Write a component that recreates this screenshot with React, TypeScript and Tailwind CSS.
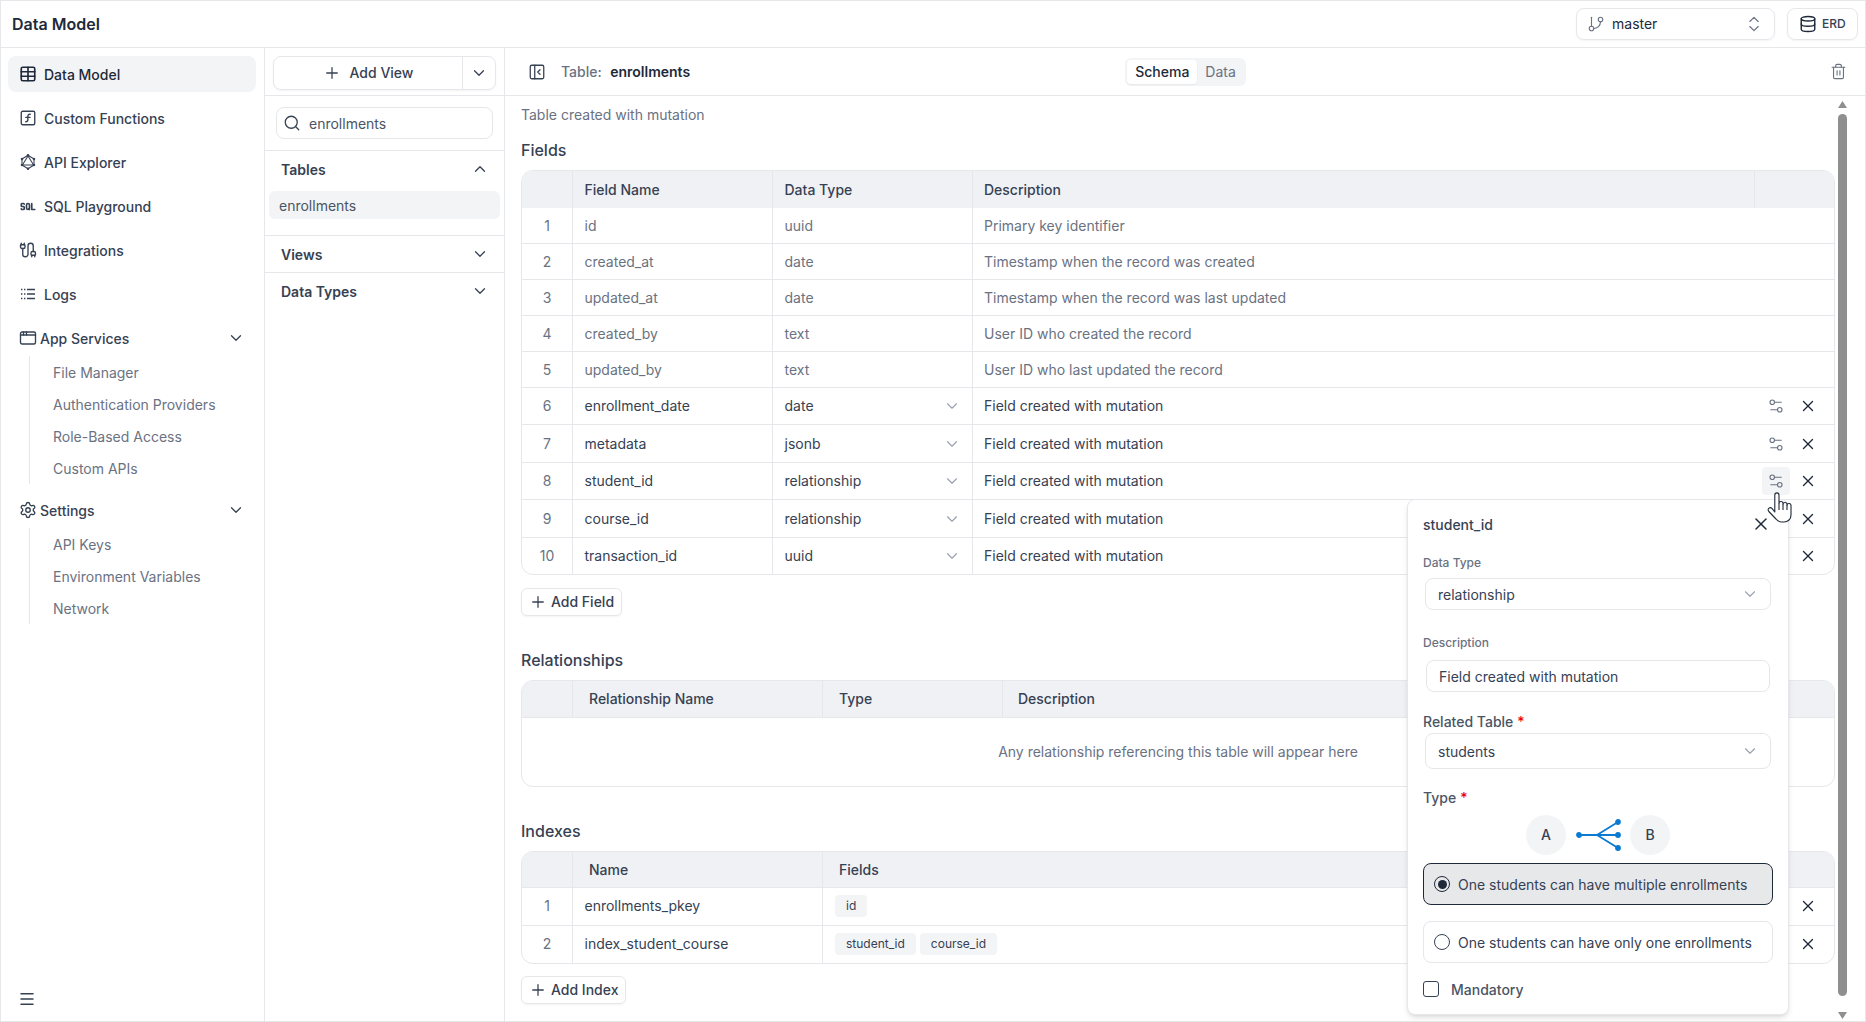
import {
  AppWindow,
  Cable,
  ChevronDown,
  ChevronUp,
  ChevronsUpDown,
  Database,
  GitBranch,
  Menu,
  PanelLeftClose,
  Plus,
  Search,
  Settings,
  Settings2,
  SquareFunction,
  Table,
  Trash2,
  X,
} from "lucide-react";
import { TbBrandGraphql, TbSql } from "react-icons/tb";
import type { ReactNode } from "react";

const LogsIcon = () => (
  <svg width="18" height="18" viewBox="0 0 18 18" fill="none" stroke="currentColor" strokeWidth="1.4">
    <path d="M2 4.5h1.4M5 4.5h1.4M8 4.5h8M2 9h1.4M5 9h1.4M8 9h8M2 13.5h1.4M5 13.5h1.4M8 13.5h8" />
  </svg>
);

const topNav = [
  { label: "Data Model", icon: <Table size={18} strokeWidth={2.2} />, active: true },
  { label: "Custom Functions", icon: <SquareFunction size={18} strokeWidth={1.8} /> },
  { label: "API Explorer", icon: <TbBrandGraphql size={18} strokeWidth={1.4} /> },
  { label: "SQL Playground", icon: <TbSql size={23} strokeWidth={2.2} /> },
  { label: "Integrations", icon: <Cable size={18} strokeWidth={1.8} /> },
  { label: "Logs", icon: <LogsIcon /> },
];

const NavGroup = ({ icon, label, items }: { icon: ReactNode; label: string; items: string[] }) => (
  <div>
    <div className="flex h-9 items-center gap-[3px] pr-[11px] pl-[11px] text-sm font-medium text-gray-700">
      {icon}
      <span className="flex-1 pt-px">{label}</span>
      <ChevronDown size={18} strokeWidth={1.7} />
    </div>
    <div className="ml-[21px] border-l border-gray-200 pl-[23px]">
      {items.map((item) => (
        <div key={item} className="flex h-8 items-center pt-px text-sm text-gray-500">
          {item}
        </div>
      ))}
    </div>
  </div>
);

const Sidebar = () => (
  <aside className="flex w-[264px] shrink-0 flex-col border-r border-gray-200 pt-2 pr-[7px] pl-[7px]">
    <div className="flex w-[248px] flex-col gap-2">
      {topNav.map((item) => (
        <div
          key={item.label}
          className={`flex h-9 items-center gap-[7px] rounded-lg pl-[11px] text-sm font-medium ${
            item.active ? "bg-gray-100 text-gray-800" : "text-gray-700"
          }`}
        >
          <span className="flex w-[18px] justify-center">{item.icon}</span>
          <span className="pt-px">{item.label}</span>
        </div>
      ))}
      <NavGroup
        icon={<AppWindow size={18} strokeWidth={1.8} />}
        label="App Services"
        items={["File Manager", "Authentication Providers", "Role-Based Access", "Custom APIs"]}
      />
      <NavGroup
        icon={<Settings size={18} strokeWidth={1.8} />}
        label="Settings"
        items={["API Keys", "Environment Variables", "Network"]}
      />
    </div>
    <div className="mt-auto flex h-[31px] items-start pl-[10px] text-gray-700">
      <Menu size={18} />
    </div>
  </aside>
);

const PanelHeader = ({ title, open }: { title: string; open?: boolean }) => (
  <div className="flex h-9 items-center justify-between pr-[15px] pl-4 text-sm font-semibold text-gray-700">
    <span className="pt-px">{title}</span>
    {open ? <ChevronUp size={18} strokeWidth={1.7} /> : <ChevronDown size={18} strokeWidth={1.7} />}
  </div>
);

const TablesPanel = () => (
  <div className="flex w-[240px] shrink-0 flex-col border-r border-gray-200">
    <div className="h-12 border-b border-gray-200 px-2 pt-2">
      <div className="flex h-[34px] rounded-lg border border-gray-200 text-sm font-medium text-gray-700 shadow-xs">
        <div className="flex flex-1 items-center justify-center gap-[9px] border-r border-gray-200">
          <Plus size={18} strokeWidth={1.7} />
          Add View
        </div>
        <div className="flex w-[32px] items-center justify-center">
          <ChevronDown size={18} strokeWidth={1.7} />
        </div>
      </div>
    </div>
    <div className="h-[55px] border-b border-gray-200 px-[11px] pt-[11px]">
      <div className="flex h-8 items-center gap-[8px] rounded-lg border border-gray-200 pl-[6px] text-sm text-gray-600">
        <Search size={18} strokeWidth={1.7} className="text-gray-700" />
        <span className="pt-0.5">enrollments</span>
      </div>
    </div>
    <div className="h-[85px] border-b border-gray-200">
      <PanelHeader title="Tables" open />
      <div className="mx-1 mt-1 flex h-7 items-center rounded-md bg-gray-100 pt-px pl-[10px] text-sm text-gray-600">
        enrollments
      </div>
    </div>
    <div className="h-[37px] border-b border-gray-200">
      <PanelHeader title="Views" />
    </div>
    <PanelHeader title="Data Types" />
  </div>
);

const readonlyFields = [
  ["id", "uuid", "Primary key identifier"],
  ["created_at", "date", "Timestamp when the record was created"],
  ["updated_at", "date", "Timestamp when the record was last updated"],
  ["created_by", "text", "User ID who created the record"],
  ["updated_by", "text", "User ID who last updated the record"],
];

const editableFields = [
  { name: "enrollment_date", type: "date", rowClass: "h-[37px]" },
  { name: "metadata", type: "jsonb", rowClass: "h-[38px]" },
  { name: "student_id", type: "relationship", rowClass: "h-[37px]" },
  { name: "course_id", type: "relationship", rowClass: "h-[38px]" },
  { name: "transaction_id", type: "uuid", rowClass: "h-[36px]" },
];

const HeaderCell = ({ className, children }: { className: string; children?: ReactNode }) => (
  <div className={`flex h-full shrink-0 items-center border-r border-gray-200 ${className}`}>{children}</div>
);

const NumCell = ({ n }: { n: number }) => (
  <div className="flex h-full w-[51px] shrink-0 items-center justify-center border-r border-gray-200 text-sm text-gray-500">
    {n}
  </div>
);

const AddButton = ({ label, className }: { label: string; className: string }) => (
  <div className={`flex h-7 w-fit items-center gap-1 rounded-md border border-gray-200 pr-[7px] pl-[7px] text-sm font-medium text-gray-700 shadow-xs ${className}`}>
    <Plus size={18} strokeWidth={1.7} />
    {label}
  </div>
);

const Title = ({ className, children }: { className: string; children: ReactNode }) => (
  <h2 className={`h-6 text-base leading-6 font-medium text-gray-700 ${className}`}>{children}</h2>
);

const Actions = ({ settings, hovered }: { settings?: boolean; hovered?: boolean }) => (
  <div className="ml-auto flex items-center gap-1 pr-3 text-gray-500">
    {settings && (
      <div className={`flex h-7 w-7 items-center justify-center rounded ${hovered ? "bg-gray-100" : ""}`}>
        <Settings2 size={18} strokeWidth={1.5} />
      </div>
    )}
    <div className="flex h-7 w-7 items-center justify-center text-gray-800">
      <X size={18} strokeWidth={1.8} />
    </div>
  </div>
);

const FieldsTable = () => (
  <div className="mt-2 overflow-hidden rounded-xl border border-gray-200">
    <div className="flex h-[37px] bg-[#f0f1f4] text-sm font-medium text-gray-700">
      <HeaderCell className="w-[51px]" />
      <HeaderCell className="w-[200px] pl-[11.5px]">Field Name</HeaderCell>
      <HeaderCell className="w-[200px] pl-[11.5px]">Data Type</HeaderCell>
      <HeaderCell className="w-[782px] pl-[11px]">Description</HeaderCell>
    </div>
    {readonlyFields.map((f, i) => (
      <div key={f[0]} className="flex h-9 items-center border-b border-gray-200 text-sm text-gray-500">
        <NumCell n={i + 1} />
        <div className="flex h-full w-[200px] items-center border-r border-gray-200 pl-[11.5px]">{f[0]}</div>
        <div className="flex h-full w-[200px] items-center border-r border-gray-200 pl-[11.5px]">{f[1]}</div>
        <div className="pl-[11px]">{f[2]}</div>
      </div>
    ))}
    {editableFields.map((f, i) => (
      <div key={f.name} className={`flex items-center border-b border-gray-200 text-sm text-gray-700 last:border-b-0 ${f.rowClass}`}>
        <NumCell n={i + 6} />
        <div className="flex h-full w-[200px] items-center border-r border-gray-200 pl-[11.5px]">{f.name}</div>
        <div className="flex h-full w-[200px] items-center justify-between border-r border-gray-200 pr-[11px] pl-[11.5px]">
          {f.type}
          <ChevronDown size={18} strokeWidth={1.5} className="text-gray-400" />
        </div>
        <div className="pl-[11px]">Field created with mutation</div>
        <Actions settings={i < 3} hovered={i === 2} />
      </div>
    ))}
  </div>
);

const RelationshipsTable = () => (
  <div className="mt-2 overflow-hidden rounded-xl border border-gray-200">
    <div className="flex h-9 bg-[#f0f1f4] text-sm font-medium text-gray-700">
      <HeaderCell className="w-[51px]" />
      <HeaderCell className="w-[250px] pl-4">Relationship Name</HeaderCell>
      <HeaderCell className="w-[180px] pl-4">Type</HeaderCell>
      <div className="flex items-center pl-[15px]">Description</div>
    </div>
    <div className="flex h-[69px] items-center justify-center border-t border-gray-200 text-sm text-gray-500">
      Any relationship referencing this table will appear here
    </div>
  </div>
);

const Chip = ({ children }: { children: ReactNode }) => (
  <span className="flex h-[22px] items-center rounded bg-gray-100 px-[11px] text-xs text-gray-700">{children}</span>
);

const indexRows = [
  { name: "enrollments_pkey", fields: ["id"] },
  { name: "index_student_course", fields: ["student_id", "course_id"] },
];

const IndexesTable = () => (
  <div className="mt-2 overflow-hidden rounded-xl border border-gray-200">
    <div className="flex h-9 border-b border-gray-200 bg-[#f0f1f4] text-sm font-medium text-gray-700">
      <HeaderCell className="w-[51px]" />
      <HeaderCell className="w-[250px] pl-4">Name</HeaderCell>
      <div className="flex items-center pl-4">Fields</div>
    </div>
    {indexRows.map((row, i) => (
      <div key={row.name} className="flex h-[37.5px] items-center border-b border-gray-200 text-sm text-gray-700 last:border-b-0">
        <NumCell n={i + 1} />
        <div className="flex h-full w-[250px] items-center border-r border-gray-200 pl-[11.5px]">{row.name}</div>
        <div className="flex gap-1 pl-3">
          {row.fields.map((f) => (
            <Chip key={f}>{f}</Chip>
          ))}
        </div>
        <Actions />
      </div>
    ))}
  </div>
);

const FakeScrollbar = () => (
  <div className="mt-[5px] flex h-[918px] w-[9px] shrink-0 flex-col items-center">
    <svg width="9" height="7" viewBox="0 0 9 7" className="text-[#8f8f8f]">
      <path d="M4.5 0 9 7H0Z" fill="currentColor" />
    </svg>
    <div className="mt-[6px] w-[9px] flex-1 rounded-full bg-[#8f8f8f]" />
    <svg width="9" height="7" viewBox="0 0 9 7" className="mt-4 text-[#8f8f8f]">
      <path d="M4.5 7 9 0H0Z" fill="currentColor" />
    </svg>
  </div>
);

const SelectBox = ({ value, className }: { value: string; className: string }) => (
  <div className={`mx-[2px] flex items-center justify-between rounded-lg border border-gray-200 pr-[11px] pl-3 text-sm text-gray-700 ${className}`}>
    <span className="pt-0.5">{value}</span>
    <ChevronDown size={18} strokeWidth={1.5} className="text-gray-400" />
  </div>
);

const RelationIcon = () => (
  <svg width="46" height="32" viewBox="0 0 46 32" fill="#0a7bd1" stroke="#0a7bd1" strokeWidth="1.8">
    <path d="M4 16H43M22 16 43 3M22 16 43 29" fill="none" />
    <circle cx="4" cy="16" r="2" />
    <circle cx="43" cy="3" r="2" />
    <circle cx="43" cy="16" r="2" />
    <circle cx="43" cy="29" r="2" />
  </svg>
);

const RadioOption = ({ label, checked, className }: { label: string; checked?: boolean; className: string }) => (
  <div
    className={`flex h-[42px] items-center gap-2 rounded-lg border pl-[10px] text-sm text-gray-700 ${
      checked ? "border-gray-800 bg-[#e7e8ea]" : "border-gray-200"
    } ${className}`}
  >
    <span className={`flex h-4 w-4 items-center justify-center rounded-full border ${checked ? "border-gray-800" : "border-gray-700"}`}>
      {checked && <span className="h-[9px] w-[9px] rounded-full bg-gray-800" />}
    </span>
    <span className="pt-0.5">{label}</span>
  </div>
);

const Required = () => <span className="ml-1 text-red-600">*</span>;

const FieldPopover = () => (
  <div className="absolute top-[451px] left-[902px] z-10 h-[516px] w-[382px] rounded-lg border border-gray-200 bg-white px-[15px] pt-[14px] shadow-md">
    <div className="flex h-5 items-center justify-between text-sm font-medium text-gray-700">
      <span className="pt-0.5">student_id</span>
      <X size={20} strokeWidth={1.8} className="mr-[2px] text-gray-800" />
    </div>
    <div className="mt-5 h-4 pt-px text-xs leading-4 font-medium text-gray-500">Data Type</div>
    <SelectBox value="relationship" className="mt-2 h-8" />
    <div className="mt-6 h-4 pt-px text-xs leading-4 font-medium text-gray-500">Description</div>
    <div className="mx-[3px] mt-[10px] flex h-8 items-center rounded-lg border border-gray-200 pt-0.5 pl-3 text-sm text-gray-700">
      Field created with mutation
    </div>
    <div className="mt-[19px] h-5 pt-px text-sm font-medium text-gray-600">
      Related Table
      <Required />
    </div>
    <SelectBox value="students" className="mt-[2px] h-9" />
    <div className="mt-[18px] h-5 pt-px text-sm font-medium text-gray-600">
      Type
      <Required />
    </div>
    <div className="mt-2 flex h-10 items-center justify-center gap-[9px]">
      <span className="flex h-10 w-10 items-center justify-center rounded-full bg-gray-100 text-sm font-medium text-gray-700">A</span>
      <RelationIcon />
      <span className="flex h-10 w-10 items-center justify-center rounded-full bg-gray-100 text-sm font-medium text-gray-700">B</span>
    </div>
    <RadioOption label="One students can have multiple enrollments" checked className="mt-2" />
    <RadioOption label="One students can have only one enrollments" className="mt-4" />
    <div className="mt-[18px] flex h-4 items-center gap-3 text-sm font-medium text-gray-600">
      <span className="h-4 w-4 rounded-[3px] border border-gray-700" />
      <span className="pt-0.5">Mandatory</span>
    </div>
  </div>
);

const HandCursor = () => (
  <svg
    width="25"
    height="31"
    viewBox="0 0 25 31"
    fill="white"
    stroke="#1f2937"
    strokeWidth="1.1"
    strokeLinejoin="round"
    className="absolute top-[444px] left-[1262px] z-20"
  >
    <path d="M7.8 3a2.1 2.1 0 0 1 4.2 0v8.5a2 2 0 0 1 4 0v1a2 2 0 0 1 4 0v1a2 2 0 0 1 4 0V23c0 4-3 7-7 7h-2c-3 0-4.5-1.2-6-3L1.8 19.5c-1-1.3-.8-2.7.2-3.4s2.3-.4 3.2.5L7.8 20Z" />
    <path d="M12 11.5V18M16 12.5V18M20 13.5V18" fill="none" />
  </svg>
);

const MainPane = () => (
  <main className="relative flex min-w-0 flex-1 flex-col">
    <div className="grid h-12 shrink-0 grid-cols-[1fr_auto_1fr] items-center border-b border-gray-200 pr-[18px] pl-[23px]">
      <div className="flex items-center gap-[15px] text-sm">
        <PanelLeftClose size={18} strokeWidth={1.7} className="text-gray-700" />
        <span className="pt-px font-medium text-gray-500">Table:</span>
        <span className="-ml-[6.5px] pt-px font-semibold text-gray-800">enrollments</span>
      </div>
      <div className="-ml-[4px] flex h-7 items-center rounded-md bg-gray-100 pr-[2px] pl-[2px] text-sm">
        <span className="flex h-6 items-center rounded bg-white px-2 pt-px font-medium text-gray-800 shadow-xs">Schema</span>
        <span className="flex h-6 items-center px-2 pt-px text-gray-500">Data</span>
      </div>
      <div className="flex justify-end text-gray-500">
        <Trash2 size={17} strokeWidth={1.6} />
      </div>
    </div>
    <div className="flex min-h-0 flex-1 gap-[3px] pr-[18px] pl-4">
      <div className="min-w-0 flex-1 pt-[8.5px]">
        <p className="h-5 text-sm leading-5 text-gray-500">Table created with mutation</p>
        <Title className="mt-[13.5px]">Fields</Title>
        <FieldsTable />
        <AddButton label="Add Field" className="mt-[13px]" />
        <Title className="mt-8">Relationships</Title>
        <RelationshipsTable />
        <Title className="mt-8">Indexes</Title>
        <IndexesTable />
        <AddButton label="Add Index" className="mt-3" />
      </div>
      <FakeScrollbar />
    </div>
    <FieldPopover />
    <HandCursor />
  </main>
);

export default function App() {
  return (
    <div className="flex h-[1022px] w-[1866px] flex-col overflow-hidden border border-gray-200 bg-white font-['Inter',sans-serif] text-gray-800">
      <header className="flex h-[47px] shrink-0 items-center justify-between border-b border-gray-200 pr-[7px] pl-[11px]">
        <h1 className="text-base font-semibold text-gray-800">Data Model</h1>
        <div className="flex items-center gap-3">
          <div className="flex h-8 w-[199px] items-center rounded-lg border border-gray-200 pr-[10px] pl-[10px] text-sm text-gray-800 shadow-xs">
            <GitBranch size={18} strokeWidth={1.5} className="mr-[7px] text-gray-500" />
            <span className="flex-1">master</span>
            <ChevronsUpDown size={20} strokeWidth={1.4} className="text-gray-500" />
          </div>
          <div className="flex h-8 w-[71px] items-center gap-[5px] rounded-lg border border-gray-200 pl-[11px] text-xs font-medium text-gray-700 shadow-xs">
            <Database size={18} strokeWidth={1.9} className="text-gray-800" />
            ERD
          </div>
        </div>
      </header>
      <div className="flex min-h-0 flex-1">
        <Sidebar />
        <TablesPanel />
        <MainPane />
      </div>
    </div>
  );
}
